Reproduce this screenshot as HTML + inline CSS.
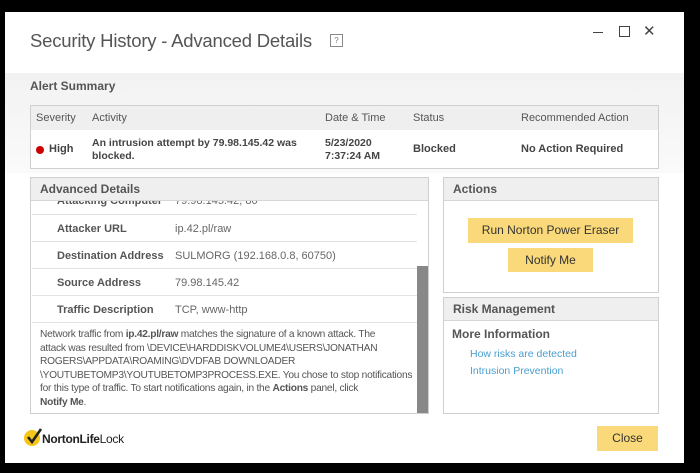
<!DOCTYPE html>
<html><head><style>
body{margin:0;width:700px;height:473px;background:#000;position:relative;overflow:hidden;font-family:"Liberation Sans",sans-serif;color:#444}
.win{position:absolute;left:5px;top:12px;width:679px;height:451px;background:#fff}
.a{position:absolute}
.hdr{background:linear-gradient(#f2f2f2,#fafafa)}
.box{border:1px solid #cfcfcf;background:#fff}
.ph{background:#efefef;border-bottom:1px solid #d6d6d6;font-weight:bold;font-size:12px;color:#555;padding-left:9px;line-height:22px}
.btn{background:#fad97a;text-align:center;font-size:12px;color:#333}
.row{position:absolute;left:1px;width:385px;height:26px;border-bottom:1px solid #e3e3e3;font-size:11px;line-height:28px}
.row b{position:absolute;left:25px;color:#555}
.row span{position:absolute;left:143px;color:#666}
.p div{white-space:nowrap}
</style></head><body>
<div class="win"></div>
<div class="a hdr" style="left:5px;top:73px;width:679px;height:100px"></div>
<div class="a" style="left:30px;top:30px;font-size:18.5px;color:#555;letter-spacing:-0.2px">Security History - Advanced Details</div>
<div class="a" style="left:330px;top:34px;width:11px;height:11px;border:1px solid #888;font-size:8px;line-height:11px;text-align:center;color:#777">?</div>
<div class="a" style="left:593px;top:32px;width:10px;border-top:1.5px solid #444"></div>
<div class="a" style="left:619px;top:26px;width:9px;height:9px;border:1.5px solid #444"></div>
<div class="a" style="left:643px;top:22px;font-size:15px;color:#444">✕</div>
<div class="a" style="left:30px;top:79px;font-size:12px;font-weight:bold;color:#555">Alert Summary</div>
<div class="a box" style="left:30px;top:105px;width:627px;height:62px"></div>
<div class="a" style="left:31px;top:106px;width:627px;height:24px;background:#efefef"></div>
<div class="a" style="top:112px;left:36px;font-size:11px;color:#555">Severity</div>
<div class="a" style="top:112px;left:92px;font-size:11px;color:#555">Activity</div>
<div class="a" style="top:112px;left:325px;font-size:11px;color:#555">Date &amp; Time</div>
<div class="a" style="top:112px;left:413px;font-size:11px;color:#555">Status</div>
<div class="a" style="top:112px;left:521px;font-size:11px;color:#555">Recommended Action</div>
<div class="a" style="left:36px;top:146px;width:8px;height:8px;border-radius:50%;background:#c00"></div>
<div class="a" style="top:143px;left:49px;font-size:11px;font-weight:bold">High</div>
<div class="a" style="top:137px;left:92px;font-size:10.5px;font-weight:bold;line-height:13px">An intrusion attempt by 79.98.145.42 was<br>blocked.</div>
<div class="a" style="top:137px;left:325px;font-size:10.5px;font-weight:bold;line-height:13px">5/23/2020<br>7:37:24 AM</div>
<div class="a" style="top:143px;left:413px;font-size:11px;font-weight:bold">Blocked</div>
<div class="a" style="top:143px;left:521px;font-size:11px;font-weight:bold">No Action Required</div>

<div class="a box" style="left:30px;top:177px;width:397px;height:235px;overflow:hidden">
<div class="row" style="top:11px;line-height:12px;height:25px"><b style="top:6px">Attacking Computer</b><span style="top:6px">79.98.145.42, 80</span></div>
<div class="a ph" style="left:0;top:0;width:388px;height:22px">Advanced Details</div>
<div class="row" style="top:37px"><b>Attacker URL</b><span>ip.42.pl/raw</span></div>
<div class="row" style="top:64px"><b>Destination Address</b><span>SULMORG (192.168.0.8, 60750)</span></div>
<div class="row" style="top:91px"><b>Source Address</b><span>79.98.145.42</span></div>
<div class="row" style="top:118px"><b>Traffic Description</b><span>TCP, www-http</span></div>
<div class="a p" style="left:9px;top:150px;font-size:10.2px;line-height:13.5px;color:#555;letter-spacing:-0.25px">
<div>Network traffic from <b>ip.42.pl/raw</b> matches the signature of a known attack. The</div>
<div>attack was resulted from \DEVICE\HARDDISKVOLUME4\USERS\JONATHAN</div>
<div>ROGERS\APPDATA\ROAMING\DVDFAB DOWNLOADER</div>
<div>\YOUTUBETOMP3\YOUTUBETOMP3PROCESS.EXE. You chose to stop notifications</div>
<div>for this type of traffic. To start notifications again, in the <b>Actions</b> panel, click</div>
<div><b>Notify Me</b>.</div>
</div>
<div class="a" style="left:386px;top:88px;width:11px;height:147px;background:#888"></div>
</div>

<div class="a box" style="left:443px;top:177px;width:214px;height:114px"><div class="ph">Actions</div></div>
<div class="a btn" style="left:468px;top:218px;width:165px;height:25px;line-height:25px">Run Norton Power Eraser</div>
<div class="a btn" style="left:508px;top:248px;width:85px;height:24px;line-height:24px">Notify Me</div>
<div class="a box" style="left:443px;top:297px;width:214px;height:115px"><div class="ph">Risk Management</div>
<div style="font-weight:bold;font-size:12px;color:#555;padding:6px 0 0 8px">More Information</div>
<div style="font-size:10.5px;color:#4a9fd0;padding:5px 0 0 26px;line-height:17px">How risks are detected<br>Intrusion Prevention</div></div>
<div class="a btn" style="left:597px;top:426px;width:61px;height:25px;line-height:25px">Close</div>

<div class="a" style="left:24px;top:430px;width:16px;height:16px;border-radius:50%;background:#f5c518"></div>
<svg class="a" style="left:24px;top:426px" width="20" height="20"><path d="M4 11 L8 16 L17 3" stroke="#222" stroke-width="2.6" fill="none"/></svg>
<div class="a" style="left:42px;top:432px;font-size:12px;font-weight:bold;color:#222;letter-spacing:-0.3px">NortonLife<span style="font-weight:normal">Lock</span></div>
</body></html>
